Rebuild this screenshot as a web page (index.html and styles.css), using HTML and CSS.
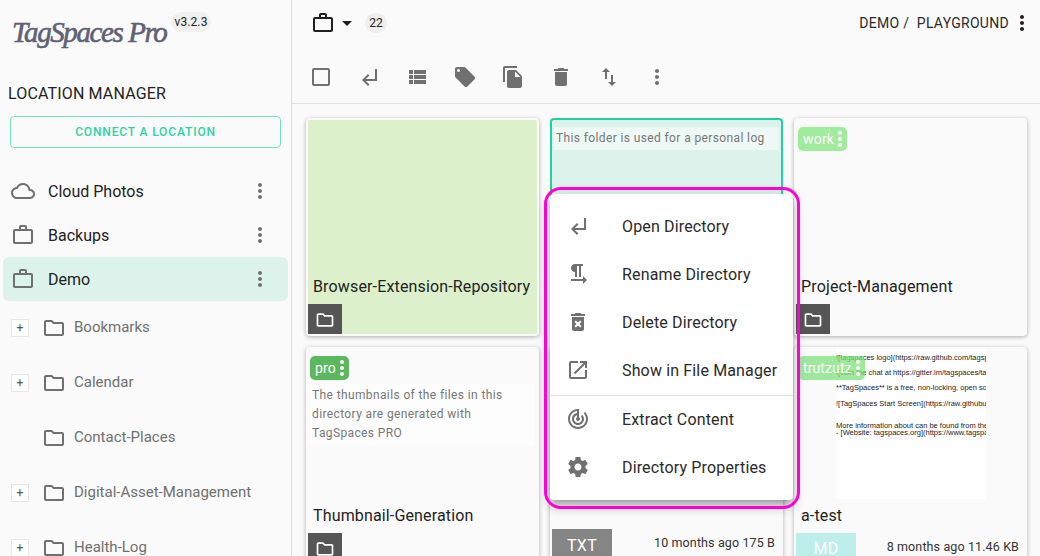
FILE: index.html
```html
<!DOCTYPE html>
<html lang="en">
<head>
<meta charset="utf-8">
<title>TagSpaces Pro</title>
<link rel="stylesheet" href="styles.css">
</head>
<body>
<svg class="defs" aria-hidden="true">
  <symbol id="i-cloud" viewBox="0 0 24 24"><path d="M19.35 10.04C18.67 6.59 15.64 4 12 4 9.11 4 6.6 5.64 5.35 8.04 2.34 8.36 0 10.91 0 14c0 3.31 2.69 6 6 6h13c2.76 0 5-2.24 5-5 0-2.64-2.05-4.78-4.65-4.96zM19 18H6c-2.21 0-4-1.79-4-4 0-2.05 1.53-3.76 3.56-3.97l1.07-.11.5-.95C8.08 7.14 9.94 6 12 6c2.62 0 4.88 1.86 5.39 4.43l.3 1.5 1.53.11c1.56.1 2.78 1.41 2.78 2.96 0 1.65-1.35 3-3 3z"/></symbol>
  <symbol id="i-work" viewBox="0 0 24 24"><path d="M14 6V4h-4v2h4zM4 8v11h16V8H4zm16-2c1.11 0 2 .89 2 2v11c0 1.11-.89 2-2 2H4c-1.11 0-2-.89-2-2l.01-11c0-1.11.88-2 1.99-2h4V4c0-1.11.89-2 2-2h4c1.11 0 2 .89 2 2v2h4z"/></symbol>
  <symbol id="i-more" viewBox="0 0 24 24"><path d="M12 8c1.1 0 2-.9 2-2s-.9-2-2-2-2 .9-2 2 .9 2 2 2zm0 2c-1.1 0-2 .9-2 2s.9 2 2 2 2-.9 2-2-.9-2-2-2zm0 6c-1.1 0-2 .9-2 2s.9 2 2 2 2-.9 2-2-.9-2-2-2z"/></symbol>
  <symbol id="i-folder" viewBox="0 0 24 24"><path d="M9.17 6l2 2H20v10H4V6h5.17M10 4H4c-1.1 0-1.99.9-1.99 2L2 18c0 1.1.9 2 2 2h16c1.1 0 2-.9 2-2V8c0-1.1-.9-2-2-2h-8l-2-2z"/></symbol>
  <symbol id="i-check" viewBox="0 0 24 24"><path d="M19 5v14H5V5h14m0-2H5c-1.1 0-2 .9-2 2v14c0 1.1.9 2 2 2h14c1.1 0 2-.9 2-2V5c0-1.1-.9-2-2-2z"/></symbol>
  <symbol id="i-return" viewBox="0 0 24 24"><path d="M11 9l1.42 1.42L8.83 14H18V4h2v12H8.83l3.59 3.58L11 21l-6-6 6-6z"/></symbol>
  <symbol id="i-list" viewBox="0 0 24 24"><path d="M4 14h4v-4H4v4zm0 5h4v-4H4v4zM4 9h4V5H4v4zm5 5h12v-4H9v4zm0 5h12v-4H9v4zM9 5v4h12V5H9z"/></symbol>
  <symbol id="i-tag" viewBox="0 0 24 24"><path d="M21.41 11.58l-9-9C12.05 2.22 11.55 2 11 2H4c-1.1 0-2 .9-2 2v7c0 .55.22 1.05.59 1.42l9 9c.36.36.86.58 1.41.58.55 0 1.05-.22 1.41-.59l7-7c.37-.36.59-.86.59-1.41 0-.55-.23-1.06-.59-1.42zM5.5 7C4.67 7 4 6.33 4 5.5S4.67 4 5.5 4 7 4.67 7 5.5 6.33 7 5.5 7z"/></symbol>
  <symbol id="i-copy" viewBox="0 0 24 24"><path d="M16 1H4c-1.1 0-2 .9-2 2v14h2V3h12V1zm-1 4l6 6v10c0 1.1-.9 2-2 2H7.99C6.89 23 6 22.1 6 21l.01-14c0-1.1.89-2 1.99-2h7zm-1 7h5.5L14 6.5V12z"/></symbol>
  <symbol id="i-delete" viewBox="0 0 24 24"><path d="M6 19c0 1.1.9 2 2 2h8c1.1 0 2-.9 2-2V7H6v12zM19 4h-3.5l-1-1h-5l-1 1H5v2h14V4z"/></symbol>
  <symbol id="i-swap" viewBox="0 0 24 24"><path d="M16 17.01V10h-2v7.01h-3L15 21l4-3.99h-3zM9 3L5 6.99h3V14h2V6.99h3L9 3z"/></symbol>
  <symbol id="i-rename" viewBox="0 0 24 24"><path d="M9 10v5h2V4h2v11h2V4h2V2H9C6.79 2 5 3.79 5 6s1.79 4 4 4zm12 8l-4-4v3H5v2h12v3l4-4z"/></symbol>
  <symbol id="i-forever" viewBox="0 0 24 24"><path d="M6 19c0 1.1.9 2 2 2h8c1.1 0 2-.9 2-2V7H6v12zm2.46-7.12l1.41-1.41L12 12.59l2.12-2.12 1.41 1.41L13.41 14l2.12 2.12-1.41 1.41L12 15.41l-2.12 2.12-1.41-1.41L10.59 14l-2.13-2.12zM15.5 4l-1-1h-5l-1 1H5v2h14V4z"/></symbol>
  <symbol id="i-open" viewBox="0 0 24 24"><path d="M19 19H5V5h7V3H5c-1.11 0-2 .9-2 2v14c0 1.1.89 2 2 2h14c1.1 0 2-.9 2-2v-7h-2v7zM14 3v2h3.59l-9.83 9.83 1.41 1.41L19 6.41V10h2V3h-7z"/></symbol>
  <symbol id="i-track" viewBox="0 0 24 24"><path d="M19.07 4.93l-1.41 1.41C19.1 7.79 20 9.79 20 12c0 4.42-3.58 8-8 8s-8-3.58-8-8c0-4.08 3.05-7.44 7-7.93v2.02C8.16 6.57 6 9.03 6 12c0 3.31 2.69 6 6 6s6-2.69 6-6c0-1.66-.67-3.16-1.76-4.24l-1.41 1.41C15.55 9.9 16 10.9 16 12c0 2.21-1.79 4-4 4s-4-1.79-4-4c0-1.86 1.28-3.41 3-3.86v2.14c-.6.35-1 .98-1 1.72 0 1.1.9 2 2 2s2-.9 2-2c0-.74-.4-1.38-1-1.72V2h-1C6.48 2 2 6.48 2 12s4.48 10 10 10 10-4.48 10-10c0-2.76-1.12-5.26-2.93-7.07z"/></symbol>
  <symbol id="i-gear" viewBox="0 0 24 24"><path d="M19.43 12.98c.04-.32.07-.64.07-.98s-.03-.66-.07-.98l2.11-1.65c.19-.15.24-.42.12-.64l-2-3.46c-.12-.22-.39-.3-.61-.22l-2.49 1c-.52-.4-1.08-.73-1.69-.98l-.38-2.65C14.46 2.18 14.25 2 14 2h-4c-.25 0-.46.18-.49.42l-.38 2.65c-.61.25-1.17.59-1.69.98l-2.49-1c-.23-.09-.49 0-.61.22l-2 3.46c-.13.22-.07.49.12.64l2.11 1.65c-.04.32-.07.65-.07.98s.03.66.07.98l-2.11 1.65c-.19.15-.24.42-.12.64l2 3.46c.12.22.39.3.61.22l2.49-1c.52.4 1.08.73 1.69.98l.38 2.65c.03.24.24.42.49.42h4c.25 0 .46-.18.49-.42l.38-2.65c.61-.25 1.17-.59 1.69-.98l2.49 1c.23.09.49 0 .61-.22l2-3.46c.12-.22.07-.49-.12-.64l-2.11-1.65zM12 15.5c-1.93 0-3.5-1.57-3.5-3.5s1.57-3.5 3.5-3.5 3.5 1.57 3.5 3.5-1.57 3.5-3.5 3.5z"/></symbol>
  <symbol id="i-caret" viewBox="0 0 24 24"><path d="M7 10l5 5 5-5z"/></symbol>
</svg>

<div class="app">
  <aside class="sidebar">
    <div class="brand">
      <span class="logo">TagSpaces Pro</span>
      <span class="version">v3.2.3</span>
    </div>
    <div class="side-title">LOCATION MANAGER</div>
    <div class="connect">CONNECT A LOCATION</div>
    <ul class="locations">
      <li class="loc"><svg class="icon"><use href="#i-cloud"/></svg><span class="loc-name">Cloud Photos</span><svg class="icon loc-more"><use href="#i-more"/></svg></li>
      <li class="loc"><svg class="icon"><use href="#i-work"/></svg><span class="loc-name">Backups</span><svg class="icon loc-more"><use href="#i-more"/></svg></li>
      <li class="loc loc-active"><svg class="icon"><use href="#i-work"/></svg><span class="loc-name">Demo</span><svg class="icon loc-more"><use href="#i-more"/></svg></li>
    </ul>
    <ul class="tree">
      <li class="node"><span class="plus">+</span><svg class="icon"><use href="#i-folder"/></svg><span class="node-name">Bookmarks</span></li>
      <li class="node"><span class="plus">+</span><svg class="icon"><use href="#i-folder"/></svg><span class="node-name">Calendar</span></li>
      <li class="node"><span class="plus plus-none"></span><svg class="icon"><use href="#i-folder"/></svg><span class="node-name">Contact-Places</span></li>
      <li class="node"><span class="plus">+</span><svg class="icon"><use href="#i-folder"/></svg><span class="node-name">Digital-Asset-Management</span></li>
      <li class="node"><span class="plus">+</span><svg class="icon"><use href="#i-folder"/></svg><span class="node-name">Health-Log</span></li>
    </ul>
  </aside>

  <main class="main">
    <header class="topbar">
      <svg class="icon icon-dark"><use href="#i-work"/></svg>
      <svg class="icon icon-dark"><use href="#i-caret"/></svg>
      <span class="count">22</span>
      <span class="crumbs">DEMO /&nbsp; PLAYGROUND</span>
      <svg class="icon icon-dark"><use href="#i-more"/></svg>
    </header>
    <div class="toolbar">
      <span class="tool"><svg class="icon"><use href="#i-check"/></svg></span>
      <span class="tool"><svg class="icon"><use href="#i-return"/></svg></span>
      <span class="tool"><svg class="icon"><use href="#i-list"/></svg></span>
      <span class="tool"><svg class="icon"><use href="#i-tag"/></svg></span>
      <span class="tool"><svg class="icon"><use href="#i-copy"/></svg></span>
      <span class="tool"><svg class="icon"><use href="#i-delete"/></svg></span>
      <span class="tool"><svg class="icon"><use href="#i-swap"/></svg></span>
      <span class="tool"><svg class="icon"><use href="#i-more"/></svg></span>
    </div>
    <section class="grid">
      <article class="card card-green">
        <div class="title">Browser-Extension-Repository</div>
        <div class="foot"><span class="type type-dir"><svg class="icon icon-white"><use href="#i-folder"/></svg></span></div>
      </article>
      <article class="card card-selected">
        <p class="desc desc-first">This folder is used for a personal log</p>
        <div class="foot"><span class="type type-dir"><svg class="icon icon-white"><use href="#i-folder"/></svg></span></div>
      </article>
      <article class="card">
        <span class="tag tag-work">work<svg class="icon tag-more"><use href="#i-more"/></svg></span>
        <div class="title">Project-Management</div>
        <div class="foot"><span class="type type-dir"><svg class="icon icon-white"><use href="#i-folder"/></svg></span></div>
      </article>
      <article class="card">
        <span class="tag tag-pro">pro<svg class="icon tag-more"><use href="#i-more"/></svg></span>
        <p class="desc desc-tagged">The thumbnails of the files in this directory are generated with TagSpaces PRO</p>
        <div class="title">Thumbnail-Generation</div>
        <div class="foot"><span class="type type-dir"><svg class="icon icon-white"><use href="#i-folder"/></svg></span></div>
      </article>
      <article class="card">
        <div class="foot foot-raised"><span class="type type-txt">TXT</span><span class="meta">10 months ago 175 B</span></div>
      </article>
      <article class="card">
        <div class="thumb">
          <p>![tagspaces logo](https://raw.github.com/tagspaces/tagspaces</p>
          <p>![Join the chat at https://gitter.im/tagspaces/tagspaces</p>
          <p>**TagSpaces** is a free, non-locking, open source</p>
          <p>![TagSpaces Start Screen](https://raw.githubusercontent</p>
          <p class="thumb-gap">More information about can be found from the</p>
          <p class="thumb-tight">- [Website: tagspaces.org](https://www.tagspaces.org</p>
        </div>
        <span class="tag tag-fade">trutzutz<svg class="icon tag-more"><use href="#i-more"/></svg></span>
        <div class="title">a-test</div>
        <div class="foot"><span class="type type-md">MD</span><span class="meta">8 months ago 11.46 KB</span></div>
      </article>
    </section>
  </main>

  <div class="menu">
    <div class="menu-item"><svg class="icon"><use href="#i-return"/></svg><span>Open Directory</span></div>
    <div class="menu-item"><svg class="icon"><use href="#i-rename"/></svg><span>Rename Directory</span></div>
    <div class="menu-item"><svg class="icon"><use href="#i-forever"/></svg><span>Delete Directory</span></div>
    <div class="menu-item menu-item-split"><svg class="icon"><use href="#i-open"/></svg><span>Show in File Manager</span></div>
    <div class="menu-item"><svg class="icon"><use href="#i-track"/></svg><span>Extract Content</span></div>
    <div class="menu-item"><svg class="icon"><use href="#i-gear"/></svg><span>Directory Properties</span></div>
  </div>
  <div class="ring"></div>
</div>
</body>
</html>
```

FILE: styles.css
```css
* { box-sizing: border-box; }
html, body { margin: 0; padding: 0; height: 100%; overflow: hidden; }
body { font-family: Roboto, "Liberation Sans", sans-serif; color: #222; background: #fafafa; }
ul { list-style: none; margin: 0; padding: 0; }
p { margin: 0; }
.defs { display: none; }

.app { position: relative; display: flex; width: 1040px; height: 556px; overflow: hidden; background: #fafafa; }

.icon { display: block; flex: none; width: 24px; height: 24px; fill: #707070; }
.icon-dark { fill: #1f1f1f; }
.icon-white { fill: #fff; }

/* sidebar */
.sidebar { flex: none; width: 292px; border-right: 1px solid #dcdcdc; height: 556px; overflow: hidden; }
.brand { display: flex; align-items: flex-start; height: 82px; padding: 12px 0 0 12px; }
.logo { font-family: "Liberation Serif", serif; font-style: italic; font-size: 29px; line-height: 40px; color: #5e6175; -webkit-text-stroke: 0.6px #5e6175; letter-spacing: -1.4px; width: 159px; white-space: nowrap; }
.version { font-size: 12px; line-height: 20px; height: 20px; padding: 0 3.5px; border-radius: 10px; background: #f0f0f0; letter-spacing: 0.1px; }
.side-title { height: 24px; line-height: 24px; padding-left: 8px; font-size: 16px; letter-spacing: 0.15px; }
.connect { height: 32px; margin: 10px 10px 0; border: 1px solid #74e0bd; border-radius: 4px; font-size: 12px; font-weight: 500; line-height: 30px; letter-spacing: 0.85px; text-align: center; color: #2fd3a3; }
.locations { margin-top: 21px; }
.loc { display: flex; align-items: center; height: 44px; margin: 0 3px; padding-left: 8px; border-radius: 6px; }
.loc-active { width: 285px; background: #dcf3eb; }
.loc-name { flex: 1; margin-left: 13px; font-size: 16px; }
.loc-more { margin-right: 16px; }
.tree { margin-top: -1px; }
.node { display: flex; align-items: center; height: 55px; padding-left: 11px; padding-bottom: 1px; }
.plus { flex: none; width: 18px; height: 18px; margin-top: 2px; margin-right: 13px; border: 1px solid #e6e6e6; background: #fff; font-size: 12px; line-height: 16px; text-align: center; color: #555; }
.plus-none { border: 0; background: none; }
.node .icon { margin-top: 1px; }
.node-name { margin-left: 8px; font-size: 15px; color: #707070; }

/* main */
.main { flex: 1; min-width: 0; height: 556px; overflow: hidden; }
.topbar { display: flex; align-items: center; height: 46px; padding: 0 6px 0 19px; }
.count { margin-left: 6px; width: 22px; height: 20px; border-radius: 10px; background: #efefef; font-size: 12px; line-height: 20px; text-align: center; }
.crumbs { margin-left: auto; margin-right: 1px; font-size: 14px; letter-spacing: 0.3px; color: #2a2a2a; }
.toolbar { display: flex; align-items: center; height: 58px; padding: 7px 0 3px 5px; border-bottom: 1px solid #e0e0e0; }
.tool { display: flex; justify-content: center; width: 48px; }

.grid { display: grid; grid-template-columns: repeat(3, 233px); grid-auto-rows: 218px; gap: 11px; padding: 14px 0 0 14px; }
.card { position: relative; display: flex; flex-direction: column; border: 2px solid #fafafa; border-radius: 4px; background: #fafafa; box-shadow: 0 1px 4px rgba(0,0,0,.32); }
.card-green { background: #dcf0cb; }
.card-selected { border-color: #1fd3a1; background: #dcf3eb; box-shadow: none; }

.desc { margin: 0 2px; padding: 2px; background: rgba(255,255,255,.5); font-size: 12px; line-height: 19px; letter-spacing: 0.38px; color: #777; }
.desc-first { margin-top: 7px; }
.desc-tagged { margin-top: 35px; }

.title { margin-top: auto; height: 24px; padding-left: 5px; font-size: 16px; line-height: 24px; letter-spacing: 0.15px; color: #222; }
.foot { display: flex; align-items: center; justify-content: space-between; height: 30px; margin-top: 5px; flex: none; }
.card > .foot:first-child, .card-selected > .foot { margin-top: auto; }
.foot-raised { margin-bottom: 4px; align-self: stretch; }
.type { display: flex; align-items: center; justify-content: center; height: 30px; padding-top: 1px; color: #fff; font-size: 16px; letter-spacing: 0.3px; }
.type-dir { width: 34px; background: #555; }
.type-dir .icon { width: 20px; height: 20px; }
.type-txt { width: 60px; padding-top: 3px; background: #858585; }
.type-md { width: 60px; background: #bdeee9; }
.meta { margin-right: 6px; margin-top: -4px; font-size: 12.5px; letter-spacing: 0.12px; color: #333; }

.tag { position: absolute; top: 7px; left: 2px; display: flex; align-items: center; height: 24px; padding-left: 5px; border-radius: 5px; color: #fff; font-size: 14px; letter-spacing: 0.2px; }
.tag-work { background: #a0eb9d; }
.tag-pro { background: #5cb85f; }
.tag-fade { background: rgba(125, 226, 125, .75); letter-spacing: 0.1px; }
.tag-more { margin-left: -6px; margin-right: -5px; fill: #fff; }

.thumb { flex: none; width: 150px; height: 152px; margin: -2px 0 0 40px; padding-top: 7px; overflow: hidden; background: #fff; font-family: "Liberation Sans", sans-serif; font-size: 7.5px; line-height: 8px; color: #222; white-space: nowrap; opacity: 0.99; }
.thumb p { height: 15.2px; }
.thumb .thumb-gap { height: 7.5px; margin-top: 7px; }
.thumb .thumb-tight { height: 8px; }

/* context menu */
.menu { position: absolute; left: 550px; top: 194px; width: 243px; height: 306px; padding: 8px 0; border-radius: 4px; background: #fff; box-shadow: 0 5px 5px -3px rgba(0,0,0,.2), 0 8px 10px 1px rgba(0,0,0,.14), 0 3px 14px 2px rgba(0,0,0,.12); }
.menu-item { display: flex; align-items: center; height: 48px; padding-left: 16px; font-size: 16px; letter-spacing: 0.15px; color: #2a2a2a; }
.menu-item span { margin-left: 32px; }
.menu-item-split { height: 49px; padding-bottom: 1px; box-shadow: 0 1px 0 #e0e0e0; }
.ring { position: absolute; left: 544px; top: 187px; width: 256px; height: 322px; border: 3px solid #ff00d4; border-radius: 17px; pointer-events: none; }
```
